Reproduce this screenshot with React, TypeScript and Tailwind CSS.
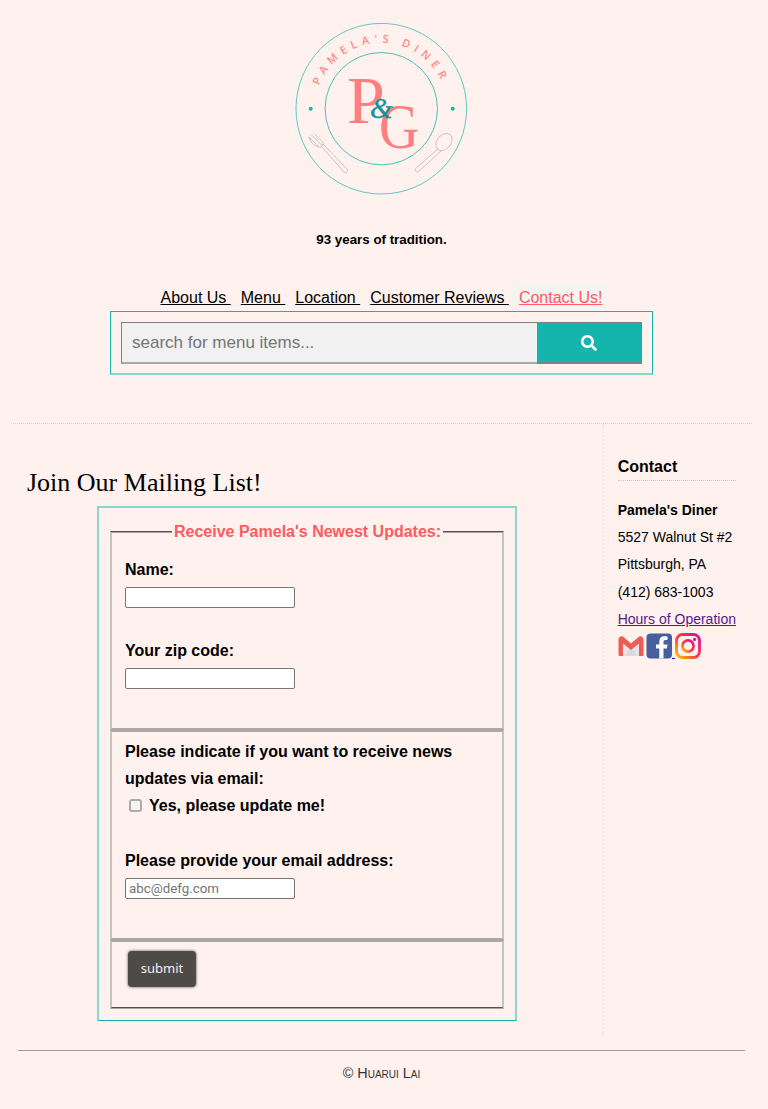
import { FaSearch } from "react-icons/fa";

const navItems = ["About Us", "Menu", "Location", "Customer Reviews"];

function Logo() {
  return (
    <svg width="176" height="176" viewBox="294 21 176 176" className="block">
      <defs>
        <path id="ring" d="M 315.3 108.7 A 66 66 0 0 1 447.3 108.7" />
      </defs>
      <circle cx="381.3" cy="108.7" r="85.3" fill="none" stroke="#5fc9c2" strokeWidth="1" />
      <circle cx="381.3" cy="108.7" r="56.2" fill="none" stroke="#4cc0b9" strokeWidth="1" />
      <circle cx="310.7" cy="108.7" r="2" fill="#1fb0aa" />
      <circle cx="452.7" cy="108.7" r="2" fill="#1fb0aa" />
      <text fontFamily="'Open Sans', sans-serif" fontSize="11" fontWeight="600" fill="#ff8a8a" letterSpacing="5" textAnchor="middle">
        <textPath href="#ring" startOffset="49.5%">
          PAMELA'S DINER
        </textPath>
      </text>
      <text x="347" y="122.5" fontFamily="'Liberation Serif', serif" fontSize="68" fill="#ff7f7f">
        P
      </text>
      <text x="379" y="148" fontFamily="'Liberation Serif', serif" fontSize="63" fill="#ff7f7f" textLength="40" lengthAdjust="spacingAndGlyphs">
        G
      </text>
      <text x="370" y="118" fontFamily="'Liberation Serif', serif" fontStyle="italic" fontSize="29" fill="#12939a" stroke="#12939a" strokeWidth="0.4">
        &amp;
      </text>
      {/* fork */}
      <g fill="none" stroke="#cfc4c2" strokeWidth="1">
        <path d="M309 137 L319 147 M311.5 135 L321.5 145 M314 133.5 L323.5 143 M309 137 C311 143 316 148 321 147 L323.5 143" />
        <path d="M321 146 L344 172 C346 174 349 171 347 169 L323 144" />
        {/* spoon */}
        <ellipse cx="444" cy="142" rx="7" ry="9.5" transform="rotate(40 444 142)" />
        <path d="M438 149 L416 168 C414 171 417 173 419 171 L441 151" />
      </g>
    </svg>
  );
}

function Socials() {
  return (
    <div className="flex items-start h-[26px]">
      <svg width="26" height="26" viewBox="0 0 26 26" className="block">
        <path d="M2 4 L13 13 L24 4 V23 H2 Z" fill="#e9e4e3" />
        <path d="M6 23 L13 15 L20 23 Z" fill="#d6dcdc" />
        <path d="M0.5 7 C0.5 3.5 3.5 2.5 5.5 4 L13 10.5 L20.5 4 C22.5 2.5 25.5 3.5 25.5 7 V21.5 C25.5 22.5 25 23 24 23 H21 V10.5 L13 17 L5 10.5 V23 H2 C1 23 0.5 22.5 0.5 21.5 Z" fill="#ee5c56" />
      </svg>
      <svg width="26" height="26" viewBox="0 0 26 26" className="block ml-[2px]">
        <rect x="0.5" y="0.5" width="25.5" height="25" rx="4" fill="#46609c" />
        <path d="M17.5 25.5 V15.5 H21 L21.5 11.5 H17.5 V9 C17.5 7.8 18.1 7 19.5 7 H21.5 V3.5 C20.5 3.3 19.3 3.2 18.3 3.2 C15.3 3.2 13.3 5 13.3 8.4 V11.5 H10 V15.5 H13.3 V25.5 Z" fill="#fff" />
      </svg>
      <span className="self-end w-[3px] h-[1px] bg-[#1a0dab]" />
      <svg width="26" height="26" viewBox="0 0 26 26" className="block">
        <defs>
          <linearGradient id="insta" x1="0" y1="1" x2="1" y2="0">
            <stop offset="0" stopColor="#ffc107" />
            <stop offset="0.45" stopColor="#fb3c3c" />
            <stop offset="1" stopColor="#d6119c" />
          </linearGradient>
        </defs>
        <rect x="1.5" y="1.5" width="23" height="23" rx="6" fill="none" stroke="url(#insta)" strokeWidth="2.8" />
        <circle cx="13" cy="13" r="5.6" fill="none" stroke="url(#insta)" strokeWidth="2.6" />
        <circle cx="19.6" cy="6.4" r="1.6" fill="#d6119c" />
      </svg>
    </div>
  );
}

export default function App() {
  return (
    <div className="bg-[#fff1ed] min-h-[1109px] font-['Liberation_Sans',Arial,sans-serif] text-black">
      <div className="w-[763px] px-[11px]">
        <header className="flex flex-col items-center pt-[21px]">
          <Logo />
          <p className="mt-[34px] text-[13.33px] leading-[18px] font-bold">93 years of tradition.</p>
          <nav className="mt-[35px] flex items-start h-[27px] text-[16px] leading-[27px]">
            {navItems.map((item) => (
              <a key={item} href="#" className="underline whitespace-pre px-[5px]">
                {item + " "}
              </a>
            ))}
            <a href="#" className="underline px-[5px] bg-[#f6f4f3] text-[#ff5a5f]">
              Contact Us!
            </a>
          </nav>
          <form className="flex w-[543px] h-[64px] p-[10px] border border-[#15b5ae] border-b-2 border-b-[#8ad6cf]">
            <input
              placeholder="search for menu items..."
              className="flex-1 min-w-0 h-[42px] bg-[#f1f1f1] px-[10px] pt-[1px] text-[17px] text-black border border-[#808080] border-b-2 border-b-[#aaa8a8] border-r-0 placeholder:text-[#757575]"
            />
            <button type="button" className="w-[105px] h-[42px] flex items-center justify-center bg-[#15b5ae] text-white border border-b-2 border-l-0 border-[#808080]">
              <FaSearch className="w-[16px] h-[16px]" />
            </button>
          </form>
        </header>

        <div className="mt-[48px] flex border-t border-dotted border-[#dcd2d0]">
          <main className="w-[593px] border-r-2 border-dotted border-[#f6e5e2] pl-[16px] pt-[41px] pb-[15px]">
            <h1 className="font-['Liberation_Serif',Georgia,serif] text-[26px] leading-[36px]">Join Our Mailing List!</h1>
            <div className="mt-[5px] ml-[70px] w-[420px] border-2 border-[#8ad6cf] border-b border-b-[#15b5ae] px-[11px] pt-[15px] pb-[11px] text-[16px] leading-[27.2px] font-bold">
              <form>
                <fieldset className="border-2 border-x-[#c6c2c0] border-t-[#a8a4a2] [border-top-style:groove] border-b-[#aca8a6] px-[13px] h-[207px]">
                  <legend className="px-[2px] ml-[47px] text-[#ff5a5f] leading-[18px]">Receive Pamela's Newest Updates:</legend>
                  <label className="block mt-[15px]">Name:</label>
                  <input type="text" className="block mt-[4px] w-[170px] h-[21px] bg-white border border-[#767676] rounded-[2px]" />
                  <label className="block mt-[29px]">Your zip code:</label>
                  <input type="text" className="block mt-[4px] w-[170px] h-[21px] bg-white border border-[#767676] rounded-[2px]" />
                </fieldset>
                <fieldset className="border-2 border-x-[#c6c2c0] border-y-[#aca8a6] px-[13px] h-[210px] pt-[6px]">
                  <p>Please indicate if you want to receive news updates via email:</p>
                  <label className="flex items-center">
                    <input type="checkbox" className="appearance-none w-[13px] h-[13px] -mt-[2px] ml-[4px] mr-[7px] bg-[#f7f5f4] border-2 border-[#ababab] rounded-[3px]" />
                    Yes, please update me!
                  </label>
                  <label className="block mt-[27px]">Please provide your email address:</label>
                  <input
                    type="email"
                    placeholder="abc@defg.com"
                    className="block mt-[4px] w-[170px] h-[21px] px-[3px] bg-white border border-[#767676] rounded-[2px] font-['Roboto',sans-serif] text-[13.33px] font-normal placeholder:text-[#757575]"
                  />
                </fieldset>
                <fieldset className="border-2 border-x-[#c6c2c0] border-t-[#aca8a6] border-b-[#a8a4a2] [border-bottom-style:groove] px-[16px] h-[69px] pt-[9px]">
                  <button type="button" className="block w-[68px] h-[36px] rounded-[4px] bg-[#4d4a48] text-[#f1eeee] font-['Noto_Sans',sans-serif] font-normal text-[13px] shadow-[0_0_3px_#4d4a48]">
                    submit
                  </button>
                </fieldset>
              </form>
            </div>
          </main>
          <aside className="pl-[13.7px] pt-[33px] text-[14px] leading-[27.2px]">
            <h2 className="w-[118px] text-[16px] leading-[20px] font-bold border-b border-dotted border-[#cfc5c3] pb-[3px] mb-[16px]">Contact</h2>
            <p className="font-bold">Pamela's Diner</p>
            <p>5527 Walnut St #2</p>
            <p>Pittsburgh, PA</p>
            <p>(412) 683-1003</p>
            <a href="#" className="underline text-[#551a8b]">Hours of Operation</a>
            <Socials />
          </aside>
        </div>
        <footer className="mx-[7px] mt-[14px] border-t border-[#9a9a9a] pt-[13px] text-center text-[14.4px] leading-[18px] [font-variant:small-caps] text-[#333]">
          © Huarui Lai
        </footer>
      </div>
    </div>
  );
}
